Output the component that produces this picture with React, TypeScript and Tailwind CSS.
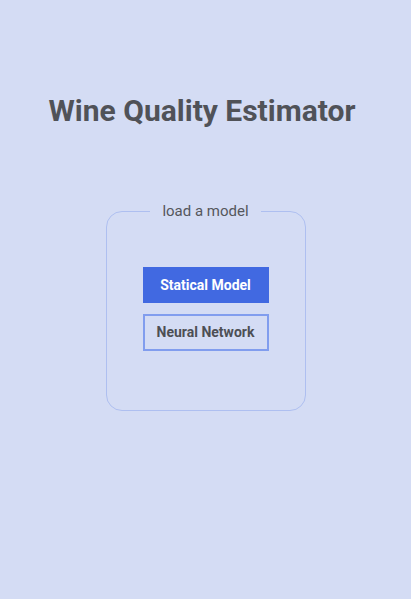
import React from 'react';

const App = () => {
  return (
    <div className="min-h-[599px] bg-[#d4dcf4] flex flex-col items-center font-['Roboto',sans-serif]">
      <h1 className="mt-[92px] mr-[7px] text-[30px] leading-[37px] font-bold text-[#505258]">Wine Quality Estimator</h1>

      <fieldset className="mt-[73px] w-[200px] h-[209px] border border-[#aebff0] rounded-[16px] flex flex-col items-center">
        <legend className="mx-auto px-[12px] text-[15px] leading-[18px] text-[#55575c]">load a model</legend>
        <div className="mt-[47px] flex flex-col items-center gap-[11px]">
          <button className="w-[126px] h-[36px] bg-[#4169e1] text-white text-[14px] font-bold">
            Statical Model
          </button>
          <button className="w-[126px] h-[37px] border-2 border-[#819dee] text-[#4d4f54] text-[14px] font-bold">
            Neural Network
          </button>
        </div>
      </fieldset>
    </div>
  );
};

export default App;
